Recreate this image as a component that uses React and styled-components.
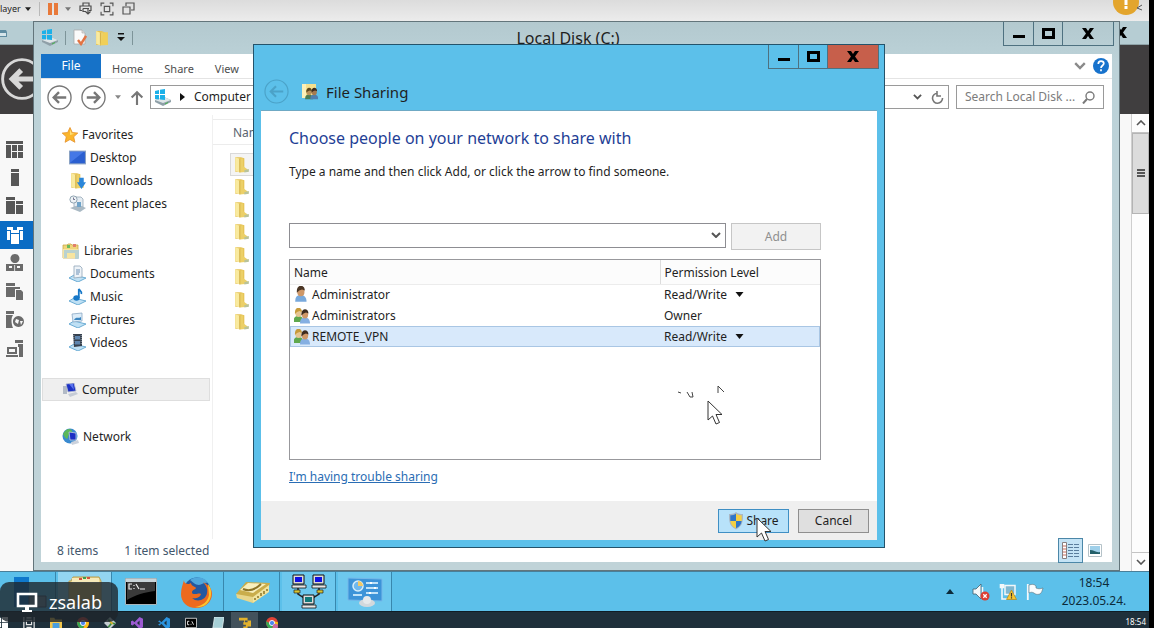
import React from "react";
import styled, { createGlobalStyle } from "styled-components";

const Global = createGlobalStyle`
  * { box-sizing: border-box; }
  html, body, #root { height: 100%; }
  body { margin: 0; overflow: hidden; background: #000; }
  body, button, input, select { font-family: "Noto Sans", "Open Sans", sans-serif; font-size: 12px; line-height: 20px; color: #1f1f1f; }
  button, input, select { margin: 0; padding: 0; border: 0; border-radius: 0; background: none; }
  svg { display: block; flex: none; }
  ul { list-style: none; margin: 0; padding: 0; }
  h1, h2, p { margin: 0; font-weight: 400; }
`;

/* ---------- layout shell ---------- */
const Screen = styled.div`
  display: grid;
  grid-template-rows: 21px 1fr 40px 17px;
  height: 100vh;
  padding-right: 5px;
  position: relative;
`;
const HostBar = styled.header`
  display: flex;
  align-items: center;
  gap: 8px;
  background: linear-gradient(#dcdcdc, #ececec);
  padding-bottom: 4px;
  position: relative;
  overflow: hidden;
`;
const HostMenu = styled.button`
  display: flex;
  align-items: center;
  gap: 4px;
  font-size: 9px;
  line-height: 16px;
`;
const BarLine = styled.span`
  width: 1px;
  height: 14px;
  background: ${(p) => p.$c || "#b9b9b9"};
`;
const PauseGroup = styled.div`
  display: flex;
  align-items: center;
  gap: 7px;
`;
const Notice = styled.div`
  position: absolute;
  right: 6px;
  top: -11px;
`;
const Session = styled.main`
  position: relative;
  overflow: hidden;
  min-height: 0;
`;

/* ---------- server manager behind ---------- */
const Manager = styled.section`
  display: flex;
  flex-direction: column;
  height: 100%;
  background: #f8f8f8;
`;
const ManagerTitle = styled.div`
  display: flex;
  align-items: center;
  justify-content: space-between;
  height: 24px;
  background: #b6cdd3;
  border-bottom: 1px solid #8fa3a8;
`;
const ManagerHead = styled.div`
  height: 69px;
  background: #403e3f;
  padding: 13px 0 0 1px;
`;
const ManagerBody = styled.div`
  display: flex;
  justify-content: space-between;
  flex: 1;
  min-height: 0;
`;
const Rail = styled.ul`
  display: flex;
  flex-direction: column;
  width: 33px;
  height: 228px;
  margin-top: 21px;
`;
const RailItem = styled.li`
  flex: 1;
  display: flex;
  align-items: center;
  padding-left: 6px;
  background: ${(p) => (p.$on ? "#0b6cc4" : "none")};
`;
const Scroll = styled.div`
  display: flex;
  flex-direction: column;
  width: 18px;
  background: #fdfdfd;
  border-left: 1px solid #cfcfcf;
`;
const ScrollBtn = styled.button`
  display: grid;
  place-items: center;
  height: 19px;
  border-bottom: 1px solid #c4c4c4;
  ${(p) => p.$end && "margin-top: auto; border-bottom: 0; border-top: 1px solid #c4c4c4;"}
`;
const Thumb = styled.div`
  display: grid;
  place-items: center;
  height: 81px;
  background: #dcdcdc;
  border: 1px solid #b4b4b4;
`;

/* ---------- windows ---------- */
const Explorer = styled.section`
  position: absolute;
  left: 33px;
  right: 29px;
  top: 0;
  bottom: 0;
  display: flex;
  flex-direction: column;
  padding: 0 7px 8px;
  background: linear-gradient(#b3c9cf, #bcd2d8 40px, #c0d3d8);
  border: 1px solid #63757b;
`;
const TitleRow = styled.div`
  display: flex;
  align-items: flex-start;
  height: 32px;
  margin-right: -2px;
`;
const QuickTools = styled.div`
  display: flex;
  align-items: center;
  gap: 7px;
  height: 31px;
  width: 92px;
`;
const Title = styled.h1`
  flex: 1;
  text-align: center;
  font-size: 16px;
  line-height: 20px;
  padding-top: 6px;
`;
const Controls = styled.div`
  display: flex;
  height: 24px;
  width: 111px;
  border: 1px solid #4e7180;
  border-top: 0;
`;
const Control = styled.button`
  display: grid;
  place-items: center;
  flex: ${(p) => p.$flex} 0 0;
  background: ${(p) => p.$bg || "none"};
  & + & { border-left: 1px solid #4e7180; }
`;
const Pane = styled.div`
  flex: 1;
  display: flex;
  flex-direction: column;
  min-height: 0;
  background: #fff;
`;
const Ribbon = styled.nav`
  display: flex;
  align-items: stretch;
  height: 25px;
  border-bottom: 1px solid #e4e4e4;
  padding-right: 3px;
`;
const FileTab = styled.button`
  width: 60px;
  background: #1672c8;
  color: #fff;
`;
const Tab = styled.button`
  margin-left: 11px;
  margin-right: 10px;
  padding-top: 5px;
  font-size: 11px;
  color: #4d4d4d;
`;
const RibbonEnd = styled.div`
  display: flex;
  align-items: center;
  gap: 7px;
  margin-left: auto;
`;
const AddressRow = styled.div`
  display: flex;
  align-items: center;
  gap: 7px;
  height: 36px;
  padding: 0 8px 0 6px;
`;
const NavButtons = styled.div`
  display: flex;
  align-items: center;
  gap: 9px;
  width: 96px;
`;
const Bare = styled.button`
  display: grid;
  place-items: center;
`;
const Address = styled.div`
  flex: 1;
  display: flex;
  align-items: center;
  height: 24px;
  gap: 9px;
  padding: 0 4px 0 3px;
  border: 1px solid #9a9a9a;
`;
const AddressEnd = styled.div`
  display: flex;
  gap: 9px;
  margin-left: auto;
`;
const Search = styled.label`
  display: flex;
  align-items: center;
  width: 148px;
  height: 24px;
  padding: 0 8px;
  border: 1px solid #9a9a9a;
  input { flex: 1; min-width: 0; outline: 0; }
  input::placeholder { color: #7c7c7c; opacity: 1; }
`;
const Columns = styled.div`
  flex: 1;
  display: flex;
  min-height: 0;
`;
const Tree = styled.nav`
  display: flex;
  flex-direction: column;
  gap: 24px;
  width: 172px;
  padding-top: 8px;
  border-right: 1px solid #f0f0f0;
`;
const Node = styled.li`
  display: flex;
  align-items: center;
  gap: 4px;
  height: 23px;
  margin: 0 2px 0 1px;
  padding-left: ${(p) => (p.$root ? 20 : 27)}px;
  background: ${(p) => (p.$on ? "#efefef" : "none")};
  box-shadow: ${(p) => (p.$on ? "inset 0 0 0 1px #dedede" : "none")};
`;
const Files = styled.div`
  flex: 1;
  max-width: 480px;
  padding-top: 4px;
`;
const FilesHead = styled.div`
  height: 26px;
  padding: 3px 0 0 20px;
  border: 1px solid #ececec;
  border-left: 0;
  color: #5b6470;
`;
const FileList = styled.ul`
  display: flex;
  flex-direction: column;
  height: 180px;
  margin: 8px 0 0 17px;
`;
const FileItem = styled.li`
  flex: 1;
  display: flex;
  align-items: center;
  padding-left: 3px;
  background: ${(p) => (p.$on ? "#f4f4f4" : "none")};
  box-shadow: ${(p) => (p.$on ? "inset 0 0 0 1px #d9d9d9" : "none")};
`;
const Status = styled.footer`
  display: flex;
  align-items: center;
  gap: 26px;
  height: 23px;
  padding: 0 10px 0 16px;
  color: #42566c;
`;
const Views = styled.div`
  display: flex;
  align-items: center;
  gap: 5px;
  margin-left: auto;
`;
const ViewOn = styled.button`
  display: grid;
  place-items: center;
  width: 25px;
  height: 25px;
  background: #c4e3f5;
  border: 1px solid #4b87a8;
`;

/* ---------- file sharing dialog ---------- */
const Dialog = styled.section`
  position: absolute;
  left: 253px;
  right: 264px;
  top: 23px;
  bottom: 23px;
  display: flex;
  flex-direction: column;
  padding: 0 7px 7px;
  background: #5cc0ea;
  border: 1px solid #24536b;
`;
const DialogControls = styled.div`
  display: flex;
  justify-content: flex-end;
  margin-right: -2px;
`;
const DialogTitle = styled.div`
  display: flex;
  align-items: center;
  gap: 12px;
  height: 42px;
  padding: 4px 0 0 3px;
  border-bottom: 1px solid #6fa9c4;
  h2 { font-size: 15px; margin-left: -4px; }
`;
const DialogBody = styled.div`
  flex: 1;
  display: flex;
  flex-direction: column;
  min-height: 0;
  padding: 15px 56px 14px 28px;
  background: #fff;
  align-items: stretch;
`;
const Heading = styled.h1`
  font-size: 16px;
  line-height: 24px;
  color: #1f3f96;
`;
const Lead = styled.p`
  margin-top: 12px;
`;
const AddRow = styled.div`
  display: flex;
  gap: 5px;
  margin-top: 41px;
`;
const Combo = styled.div`
  flex: 1;
  position: relative;
  height: 25px;
  select {
    width: 100%;
    height: 100%;
    appearance: none;
    border: 1px solid #8d8d92;
    padding: 0 24px 0 6px;
  }
  svg { position: absolute; right: 5px; top: 9px; pointer-events: none; }
`;
const PushButton = styled.button`
  display: flex;
  align-items: center;
  justify-content: center;
  gap: 2px;
  width: ${(p) => p.$w || 71}px;
  height: ${(p) => p.$h || 24}px;
  border: 1px solid ${(p) => (p.$hot ? "#3f8fc4" : "#8f8f8f")};
  background: ${(p) => (p.$hot ? "#b8e2fa" : "#dfdfdf")};
  &:disabled { color: #8f8f8f; background: #f2f2f2; border-color: #c6c6c6; }
`;
const ListBox = styled.div`
  flex: 1;
  margin-top: 9px;
  border: 1px solid #98989c;
  min-height: 0;
`;
const People = styled.table`
  width: 100%;
  border-collapse: collapse;
  table-layout: fixed;
  th, td { padding: 0 0 0 4px; height: 21px; text-align: left; font-weight: 400; }
  th { height: 24px; padding-top: 2px; background: #fcfcfc; border-bottom: 1px solid #ececec; }
  th:last-child { width: 160px; border-left: 1px solid #dcdcdc; }
`;
const Person = styled.tr`
  background: ${(p) => (p.$on ? "#d8e9fb" : "none")};
  outline: ${(p) => (p.$on ? "1px solid #a9c6e4" : "none")};
  outline-offset: -1px;
`;
const Cell = styled.div`
  display: flex;
  align-items: center;
  gap: ${(p) => p.$gap || 2}px;
  select { appearance: none; field-sizing: content; outline: 0; }
`;
const Help = styled.a`
  align-self: flex-start;
  margin-top: 7px;
  line-height: 20px;
  color: #2a6db4;
`;
const DialogFoot = styled.footer`
  display: flex;
  align-items: center;
  justify-content: flex-end;
  gap: 9px;
  height: 39px;
  padding-right: 8px;
  background: #efefef;
`;
const Pointer = styled.svg`
  position: absolute;
  left: ${(p) => p.$x}px;
  top: ${(p) => p.$y}px;
  pointer-events: none;
`;

/* ---------- task bars ---------- */
const Taskbar = styled.nav`
  display: flex;
  align-items: stretch;
  gap: 2px;
  background: #5cc0ea;
  border-top: 1px solid #4a7f99;
  padding-left: 2px;
`;
const Task = styled.button`
  display: grid;
  place-items: center;
  width: 54px;
  background: ${(p) => (p.$bg ? p.$bg : "none")};
  border-right: 1px solid ${(p) => (p.$line ? "#3887ad" : "transparent")};
`;
const Tray = styled.div`
  display: flex;
  align-items: center;
  gap: 9px;
  margin-left: auto;
`;
const TrayArrow = styled(Bare)`
  margin-right: 9px;
`;
const Clock = styled.time`
  display: block;
  width: 82px;
  margin-right: 14px;
  text-align: center;
  color: #0c2b3a;
  div { height: 18px; line-height: 18px; }
`;
const HostTasks = styled.nav`
  display: flex;
  align-items: center;
  background: #1f303b;
  border-top: 1px solid #0f1d26;
  overflow: hidden;
  padding-right: 3px;
  time { margin-left: auto; color: #fff; font-size: 8px; line-height: 16px; padding-top: 4px; }
`;
const HostTask = styled.button`
  display: grid;
  place-items: center;
  width: 27px;
  height: 17px;
  margin-left: ${(p) => (p.$first ? -12 : 0)}px;
  padding-top: 5px;
  background: ${(p) => (p.$on ? "#43525c" : "none")};
`;
const Watermark = styled.div`
  position: absolute;
  left: 0;
  bottom: 6px;
  display: flex;
  align-items: center;
  gap: 11px;
  width: 118px;
  height: 40px;
  padding-left: 16px;
  border-radius: 9px;
  background: rgba(30, 38, 44, 0.8);
  color: #fff;
  font-size: 18px;
`;

/* ---------- icons ---------- */
const Caret = ({ w = 8, h = 5, c = "#222" }) => (
  <svg width={w} height={h} viewBox="0 0 8 5"><path d="M0 0h8L4 5z" fill={c} /></svg>
);
const Chevron = ({ w = 10, up, c = "#555", s = 2 }) => (
  <svg width={w} height={w * 0.6} viewBox="0 0 10 6">
    <path d={up ? "M1 5l4-4 4 4" : "M1 1l4 4 4-4"} fill="none" stroke={c} strokeWidth={s} />
  </svg>
);
const Round = ({ size, c, flip, s = 1.4, o = 1 }) => (
  <svg width={size} height={size} viewBox="0 0 26 26" opacity={o}>
    <g fill="none" stroke={c} transform={flip ? "translate(26 0) scale(-1 1)" : undefined}>
      <circle cx="13" cy="13" r="12" strokeWidth={s} />
      <path d="M20 13H7.500M12.500 7.500L7 13l5.500 5.500" strokeWidth={s * 1.8} />
    </g>
  </svg>
);
const Drive = () => (
  <svg width="17" height="17" viewBox="0 0 17 17">
    <path d="M1 11l9-3 7 3v2l-8 4-8-4z" fill="#8fa0a8" />
    <path d="M1 11l9-3 7 3-8 3z" fill="#dfe6e8" />
    <path d="M11 15l3-1.500" stroke="#43b649" />
    <path d="M1 2l4-1v4H1zM6 .8L11 0v5H6zM1 6h4v4.500L1 10zM6 6h5v5l-5-.6z" fill="#1cb0e8" />
  </svg>
);
const Folder = ({ w = 15, extra }) => (
  <svg width={w} height={w} viewBox="0 0 15 15">
    <path d="M2 1h5l3 1v12H2z" fill="#e6c253" />
    <path d="M2 1l4 1.500v12L2 13z" fill="#f9ea9f" />
    <path d="M6 2.500L9 2v7l4 3v2l-7 .5z" fill="#ecd068" />
    <path d="M6 2.500v12" fill="none" stroke="#cba63b" strokeWidth=".7" />
    {extra === "down" && <path d="M9 5h4v4h2l-4 6-4-6h2z" fill="#2b86d9" />}
    {extra === "plain" && <path d="M9 2h4v12H6z" fill="#f0cf58" />}
    {!extra && <path d="M10 12.500l4-1v2.500l-4 .5z" fill="#b9c39a" />}
  </svg>
);
const DocCheck = () => (
  <svg width="14" height="17" viewBox="0 0 14 17">
    <path d="M1 1h8l3 3v11H1z" fill="#fafafa" stroke="#a9a9a9" strokeWidth=".8" />
    <path d="M9 1v3h3" fill="#ddd" stroke="#a9a9a9" strokeWidth=".6" />
    <path d="M5 11l3 4 5-8" fill="none" stroke="#e27443" strokeWidth="2.400" />
  </svg>
);
const Star = () => (
  <svg width="16" height="16" viewBox="0 0 16 16">
    <path d="M8 .5l2.300 5 5.500.6-4.100 3.700 1.200 5.500L8 12.500l-4.900 2.800 1.200-5.500L.2 6.100l5.500-.6z" fill="#fbb62c" stroke="#e5902b" strokeWidth=".8" />
    <path d="M8 2.500l1.600 3.800 3 .5L8 8z" fill="#ffe07a" />
  </svg>
);
const DesktopIcon = () => (
  <svg width="17" height="15" viewBox="0 0 16 14">
    <rect x=".5" y="1" width="15" height="12" fill="#2b5fd0" stroke="#8aa2c4" />
    <path d="M1 12L14 1.500H1z" fill="#4578e6" />
  </svg>
);
const Stand = ({ children }) => (
  <svg width="17" height="17" viewBox="0 0 17 17">
    <path d="M0 13l5-3 12 3-8 4z" fill="#bfe0f4" stroke="#5fa5d0" strokeWidth=".9" />
    {children}
  </svg>
);
const Documents = () => (
  <Stand><path d="M5 1h6l2 2v9l-8 1z" fill="#eef3f8" stroke="#8fa4b8" strokeWidth=".8" /><path d="M7 5h4M7 7h4M7 9h3" stroke="#6b8fb5" /></Stand>
);
const Music = () => (
  <Stand><ellipse cx="7.500" cy="10" rx="3.200" ry="2.800" fill="#1778c8" /><path d="M9.800 10V1c1 2 3.500 2 2.500 5" fill="none" stroke="#1778c8" strokeWidth="1.800" /></Stand>
);
const Pictures = () => (
  <Stand><path d="M3 3l10-1v8L4 11z" fill="#dcecf8" stroke="#8aa8c4" strokeWidth=".8" /><path d="M5 9c2-4 4-1 7-3v3z" fill="#3b86c0" /></Stand>
);
const Videos = () => (
  <Stand><path d="M4 0h9v12l-8 1z" fill="#37414e" /><path d="M6 2h5v3.500H6zM6 7h5v3.500H6z" fill="#5f86b0" /><path d="M4.800 1v10M12.200 1v10" stroke="#b8c4d0" strokeDasharray="1 1" strokeWidth=".8" /></Stand>
);
const Recent = () => (
  <svg width="17" height="17" viewBox="0 0 17 17">
    <path d="M5 2h7l2 2v8H5z" fill="#e4ecf2" stroke="#97a8b6" strokeWidth=".8" />
    <circle cx="4.500" cy="4.500" r="3.600" fill="#eef3f6" stroke="#90a4b2" />
    <path d="M4.500 2.500v2H6" stroke="#557" fill="none" strokeWidth=".8" />
    <path d="M1 13l9-3 7 3-6 4z" fill="#a9b9c4" /><path d="M8 7h4v5H8z" fill="#6fa3c8" />
  </svg>
);
const Libraries = () => (
  <svg width="18" height="18" viewBox="0 0 18 18">
    <path d="M1 3h4l1-1h3l1 1h6v13H1z" fill="#f0d57a" stroke="#c9a94b" strokeWidth=".8" />
    <path d="M5 3h3v3H5z" fill="#6abb5b" /><path d="M11 2h3v3h-3z" fill="#e3806b" />
    <path d="M1 7h15v9H1z" fill="#f7e5a0" />
    <path d="M5 16v-5h8v6h4V8H2v8z" fill="#9fcbe2" opacity=".7" />
  </svg>
);
const Monitor = () => (
  <svg width="16" height="14" viewBox="0 0 16 14">
    <path d="M1 3h4v8H1z" fill="#b2bac6" /><path d="M4 1l8-1 2 8-8 1z" fill="#1c31c4" stroke="#b6bed0" strokeWidth=".8" />
    <path d="M7 1l4 0 1 6z" fill="#5a74ee" /><path d="M6 11l8-2 2 2-8 3z" fill="#c6ccd6" />
  </svg>
);
const Network = () => (
  <svg width="17" height="17" viewBox="0 0 17 17">
    <circle cx="8" cy="8" r="7.500" fill="#3a8ad0" /><path d="M1 6c3-6 8-6 9-3s-4 3-4 6-3 2-5-3z" fill="#5bb85a" />
    <path d="M7 4l7 1v7H8z" fill="#1c2fc4" stroke="#c4cce0" strokeWidth=".8" /><path d="M9 14l7-2 1 3-7 2z" fill="#ccd2dc" />
  </svg>
);
const Head = ({ x, hair, body, skin = "#cf9868" }) => (
  <g transform={`translate(${x} 0)`}>
    <path d="M0 14c0-5 2-6 5-6s5 2 5 6z" fill={body} />
    <ellipse cx="5" cy="5" rx="3.200" ry="4" fill={skin} />
    <path d="M1.500 6c-1-8 7-8 7-2L6 3 3.500 4z" fill={hair} />
  </g>
);
const User = () => (
  <svg width="16" height="17" viewBox="0 0 13 15"><Head x={0.5} hair="#4a3524" body="#78a9dc" /></svg>
);
const Group = () => (
  <svg width="16" height="16" viewBox="0 0 16 16">
    <Head x={-0.5} hair="#c79a3a" skin="#e6c592" body="#5fa84d" />
    <g transform="translate(0 1.500)"><Head x={6} hair="#3d2c20" body="#85afe2" /></g>
  </svg>
);
const ShareFolder = () => (
  <svg width="17" height="17" viewBox="0 0 17 17">
    <path d="M1 1h14v14H1z" fill="#f5e18e" /><path d="M1 1h4v14H1z" fill="#fbf0b8" />
    <g transform="translate(4.500 5) scale(.8)"><Head x={-0.5} hair="#5c4a20" skin="#b8915a" body="#4a7d52" /><Head x={6} hair="#3d2c20" skin="#a47a50" body="#4f7fae" /></g>
  </svg>
);
const Shield = () => (
  <svg width="16" height="18" viewBox="0 0 16 18">
    <path d="M8 0c2 2 5 2 7 2 0 7 0 12-7 15.500C1 14 1 9 1 2c2 0 5 0 7-2z" fill="#a9b7c4" />
    <path d="M8 1.700V9H2.300V3.200c2 0 4-.3 5.700-1.500z" fill="#2f76c9" /><path d="M8 1.700V9h5.700V3.200c-2 0-4-.3-5.700-1.500z" fill="#f3cf45" />
    <path d="M8 9H2.400c.4 3.500 2 5.700 5.600 7.300z" fill="#f3cf45" /><path d="M8 9h5.600c-.4 3.500-2 5.700-5.600 7.300z" fill="#2f76c9" />
  </svg>
);
const railPaths = [
  "M0 1h17v3H0zM0 5h5v13H0zM6 5h5v6H6zM12 5h5v6h-5zM6 12h5v6H6zM12 12h5v6h-5z",
  "M5 0h8v3H5zM5 4h8v13H5z",
  "M0 0h9v3H0zM0 4h9v13H0zM10 4h7v3h-7zM10 8h7v9h-7z",
  "M1 1h6v3H1zM11 1h6v3h-6zM5 4h8v3H5zM1 5h3v9H1zM14 5h3v9h-3zM5 8h8v10H5z",
  "M9 0a4.500 4.500 0 1 1-.1 0zM0 10h17v7H0zM3 12v2h3v-2zM11 12v2h3v-2zM8.300 11v6h.8v-6z",
  "M0 0h9v3H0zM0 4h14v2H9v8H0zM10 7h5l2 2v8h-7z",
  "M0 0h8v3H0zM0 4h7c-2 3-2 8 0 13H0zM12.500 5a5.500 5.500 0 1 1-.1 0zM10 8l3 1-1 4-3-2zM14 10l3 0-2 4z",
  "M9 0h8v3H9zM12 4h5v13h-4V7h-1zM1 7h10v7H1zM0 15h12v2H0zM3 9v3h6V9z",
];
const RailIcon = ({ i }) => (
  <svg width="18" height="18" viewBox="0 0 18 18"><path d={railPaths[i]} fillRule="evenodd" fill={i === 3 ? "#fff" : i < 3 ? "#575757" : "#6b6b6b"} /></svg>
);
const Printer = () => (
  <svg width="13" height="13" viewBox="0 0 13 13" fill="none" stroke="#4c4c4c" strokeWidth="1.200">
    <path d="M4 4V1h6v3M3 8.500H1V4h11v4.500h-2M4 6.500h6M9 6.500v5M6.500 9.500L9 12l2.500-2.500M4 6.500v3h3" />
  </svg>
);
const FullScreen = () => (
  <svg width="14" height="14" viewBox="0 0 13 13" fill="none" stroke="#555" strokeWidth="1.100">
    <path d="M1 4V1h3M9 1h3v3M12 9v3H9M4 12H1V9M4 4h5v5H4z" />
  </svg>
);
const Unity = () => (
  <svg width="13" height="13" viewBox="0 0 13 13" fill="none" stroke="#555" strokeWidth="1.200">
    <path d="M4 4V1h8v7H9M1 5h7v7H1z" />
  </svg>
);
const MinGlyph = () => <svg width="12" height="12" viewBox="0 0 12 12"><path d="M0 7h12v3H0z" fill="#000" /></svg>;
const MaxGlyph = () => <svg width="13" height="11" viewBox="0 0 13 11"><path d="M1.500 1.500h10v8h-10z" fill="none" stroke="#000" strokeWidth="3" /></svg>;
const CloseGlyph = () => <svg width="12" height="11" viewBox="0 0 12 11"><path d="M0 0h4l2 3 2-3h4L8 5.500 12 11H8L6 8l-2 3H0l4-5.500z" fill="#000" /></svg>;
const Magnifier = () => (
  <svg width="13" height="13" viewBox="0 0 13 13" fill="none" stroke="#7a7a7a"><circle cx="8" cy="5" r="4" strokeWidth="1.400" /><path d="M5 8l-4 4.500" strokeWidth="2" /></svg>
);
const Refresh = () => (
  <svg width="13" height="13" viewBox="0 0 13 13" fill="none" stroke="#777" strokeWidth="1.600"><path d="M11.500 7a5 5 0 1 1-5-4.800M6 0v5h4" /></svg>
);
const Details = () => (
  <svg width="17" height="17" viewBox="0 0 17 17"><path d="M.5.5h4v16h-4z" fill="#fff" stroke="#8a7f7f" /><path d="M1 4h3M1 7h3M1 10h3M1 13h3" stroke="#c56b5a" /><path d="M6 2.500h5M12 2.500h5M6 5.500h5M12 5.500h5M6 8.500h5M12 8.500h5M6 11.500h5M12 11.500h5M6 14.500h5M12 14.500h5" stroke="#5a7d9c" /></svg>
);
const Thumbs = () => (
  <svg width="14" height="13" viewBox="0 0 14 13"><path d="M.5.5h13v12H.5z" fill="#fff" stroke="#b5c2c8" /><path d="M2 2h10v8H2z" fill="#9fd0ea" /><path d="M2 10V6c4 0 6 3 10 2v2z" fill="#24606a" /></svg>
);
const ManagerTask = () => (
  <svg width="36" height="36" viewBox="0 0 36 36"><path d="M3 3h15v30H3z" fill="#0f78cc" /><path d="M18 22h17v11H18z" fill="#7895a4" stroke="#456" /></svg>
);
const ExplorerTask = () => (
  <svg width="36" height="34" viewBox="0 0 36 34"><path d="M4 6l2-4h26l2 4v24H2V6z" fill="#ead58a" stroke="#b99e50" /><path d="M5 3h27v5H5z" fill="#f6e9b8" /><path d="M12 4h3M20 3h3" stroke="#d5523f" strokeWidth="2" /><path d="M16 3h3" stroke="#3f9c4f" strokeWidth="2" /><path d="M2 8h31v23H2z" fill="#dfc068" /></svg>
);
const CmdTask = () => (
  <svg width="32" height="27" viewBox="0 0 32 27"><path d="M.5.5h31v26H.5z" fill="#000" stroke="#a9b6bc" /><path d="M1 1h30v3H1z" fill="#c9d4d8" /><path d="M2 4h28v9c-10 1-20 4-28 9z" fill="#3a3a3a" /><path d="M7 6H4v5h3M9 7v1M9 10v1M11 6l3 5M15 11h5" fill="none" stroke="#eee" strokeWidth="1.200" /></svg>
);
const Firefox = () => (
  <svg width="33" height="32" viewBox="0 0 33 32">
    <circle cx="17" cy="15" r="13.500" fill="#23589f" /><path d="M10 4c6-4 15-3 18 3-4-1-6 2-9 2-4 0-6-3-9-5z" fill="#4fa8dc" />
    <path d="M4 4c0 3 2 4 5 4l2-1c0 3 5 4 5 5s-4 2-4 4 1 2 3 2c3 0 4-1 6 0-1 4-6 5-9 4 5 5 14 2 15-5 1-4-1-8-4-11 6 3 9 7 9 12 0 8-7 14-16 14C7 32 1 26 1 18 1 12 3 8 4 4z" fill="#ec6a1e" />
    <path d="M28 8c4 5 4 12 1 17-3 5-8 7-14 6 8-1 13-6 14-12z" fill="#fbc52d" />
  </svg>
);
const Mailbox = () => (
  <svg width="36" height="24" viewBox="0 0 36 24"><path d="M1 14L11 2l24 1-3 10-14 10z" fill="#c9ad4b" /><path d="M1 14l17 3v6L2 18z" fill="#e7d68b" /><path d="M18 17L34 5v7L18 23z" fill="#f1e49f" /><path d="M5 10L13 3l18 1-13 9z" fill="#f8efbd" /><path d="M8 9c7 3 13 0 18-5" fill="none" stroke="#8c7427" strokeWidth="2" /><path d="M20 18v2M23 16v2M26 13v3M29 11v3M32 9v2" stroke="#8c7427" strokeWidth="1.500" /></svg>
);
const Pc = ({ x, y, c }) => (
  <g transform={`translate(${x} ${y})`}><path d="M1 0h11v9H1z" fill="#dcdcdc" stroke="#111" /><path d="M3 2h7v5H3z" fill={c} /><path d="M0 10h14v3H0z" fill="#e8e8e8" stroke="#111" strokeWidth=".8" /></g>
);
const NetTask = () => (
  <svg width="36" height="36" viewBox="0 0 36 36"><path d="M7 14v6l6 4v4M28 14v6l-6 4v4" fill="none" stroke="#222" strokeWidth="1.500" /><path d="M3 16h6v3H3zM26 16h6v3h-6z" fill="#d8c32f" stroke="#222" strokeWidth=".7" /><Pc x={1} y={1} c="#1010e0" /><Pc x={21} y={1} c="#1010e0" /><Pc x={11} y={21} c="#107878" /></svg>
);
const PanelTask = () => (
  <svg width="36" height="32" viewBox="0 0 36 32"><path d="M1 2l34 1v22L1 24z" fill="#3c93d8" stroke="#74b8ea" /><circle cx="11" cy="10" r="5" fill="#6fb8ee" stroke="#d7eefb" strokeWidth="1.500" /><path d="M11 5a5 5 0 0 1 5 5h-5z" fill="#f2c866" /><path d="M19 7h12M19 12h12M19 17h12M6 19h9" stroke="#bfe2f8" strokeWidth="2" /><path d="M24 6v2M28 11v2M23 16v2" stroke="#fff" strokeWidth="2" /><ellipse cx="20" cy="27" rx="8" ry="4" fill="#d3d8dc" /><circle cx="20" cy="24" r="4" fill="#e6e9eb" /></svg>
);
const Speaker = () => (
  <svg width="18" height="18" viewBox="0 0 18 18"><path d="M1 6h3l5-5v15l-5-5H1z" fill="#f4f8fa" stroke="#42606e" strokeWidth=".8" /><path d="M10.500 4v6" stroke="#f4f8fa" strokeWidth="1.500" /><circle cx="13" cy="13" r="4.500" fill="#dd3f34" /><path d="M11.300 11.300l3.400 3.400M14.700 11.300l-3.400 3.400" stroke="#fff" strokeWidth="1.300" /></svg>
);
const NetWarn = () => (
  <svg width="18" height="18" viewBox="0 0 18 18"><path d="M6 2.500h10v9H6z" fill="#7fb7d0" stroke="#f2f7f9" strokeWidth="1.500" /><path d="M3 1v4M1.500 1v3.500h3V1M3 5v11h5" fill="none" stroke="#f2f7f9" strokeWidth="1.600" /><path d="M12.500 7l5 9.500h-10z" fill="#f7c531" stroke="#b98516" strokeWidth=".7" /><path d="M12.500 10v3.500M12.500 14.300v1.200" stroke="#333" strokeWidth="1.200" /></svg>
);
const Flag = () => (
  <svg width="18" height="18" viewBox="0 0 18 18"><path d="M1.800 1v16" stroke="#f4f8fa" strokeWidth="1.800" /><path d="M3 2c3-1 5-1 7 1v2c2 1 4 1 7 0-1 3-1 4-3 6-3 1-5 0-6-1-2-1-3-1-5 0z" fill="#fafcfd" stroke="#55707c" strokeWidth=".6" /></svg>
);
const chromeParts = (
  <><circle cx="7" cy="7" r="7" fill="#e04335" /><path d="M0 5c0 8 5 9 7 9l2-6-5-1z" fill="#35a853" /><path d="M14 6c0 6-4 8-7 8l3-6-1-3z" fill="#fbc116" /><circle cx="7" cy="7" r="3" fill="#4b85f0" stroke="#fff" /></>
);
const hostIcons = [
  ["Start", <path d="M0 1h6v5H0zM7 0h7v6H7zM0 7h6v5H0zM7 7h7v6H7z" fill="#fff" />],
  ["Task view", <path d="M1 0v13M4 1h6M4 12h6M4 4h6v5H4zM13 0v13" fill="none" stroke="#e6e6e6" strokeWidth="1.400" />],
  ["Files", <><path d="M0 1h5l1 2h8v10H0z" fill="#f3c64b" /><path d="M3 7h8v6H3z" fill="#4a9ede" /></>],
  ["Chrome", chromeParts],
  ["Git", <><path d="M7 0l7 7-7 7-7-7z" fill="#c4cbd0" /><path d="M5 3l4 4-4 5M9 7l4 1" fill="none" stroke="#3c8a3e" strokeWidth="2" /><path d="M7 5l3 3" stroke="#e0b42c" strokeWidth="2" /></>],
  ["Visual Studio", <path d="M10 0l4 2v10l-4 2-6-6-2 2-2-1V5l2-1 2 2zM10 4L7 7l3 3z" fillRule="evenodd" fill="#9c5ad2" />],
  ["Code", <path d="M10 0l4 2v10l-4 2-6-6-2 2-2-1 3-2-3-2 2-1 2 2zM10 4L7 7l3 3z" fillRule="evenodd" fill="#2b93de" />],
  ["Prompt", <><path d="M.5 1.500h13v11H.5z" fill="#000" stroke="#ddd" /><path d="M5 5H3v4h2M7 8v1M8 5l2 4" stroke="#fff" fill="none" /></>],
  ["Notepad", <path d="M3 0h11l-2 13H1z" fill="#a6cfd6" stroke="#dcecef" />],
  ["Workstation", <path d="M0 1h10v3H7v2h3V4h4v7h-4v3H5v-3h3V9H5V6h1V4H0z" fill="#e3b22c" />],
  ["Chrome profile", <>{chromeParts}<circle cx="11" cy="11" r="3" fill="#c96aa0" /></>],
];

const WindowControls = ({ red }) => (
  <Controls>
    <Control $flex={30} aria-label="Minimize"><MinGlyph /></Control>
    <Control $flex={28} aria-label="Maximize"><MaxGlyph /></Control>
    <Control $flex={51} $bg={red && "#c75f4b"} aria-label="Close"><CloseGlyph /></Control>
  </Controls>
);

const tree = [
  [["Favorites", <Star />, true], ["Desktop", <DesktopIcon />], ["Downloads", <Folder w={17} extra="down" />], ["Recent places", <Recent />]],
  [["Libraries", <Libraries />, true], ["Documents", <Documents />], ["Music", <Music />], ["Pictures", <Pictures />], ["Videos", <Videos />]],
  [["Computer", <Monitor />, true, true]],
  [["Network", <Network />, true]],
];
const people = [
  ["Administrator", <User />, "Read/Write"],
  ["Administrators", <Group />, null],
  ["REMOTE_VPN", <Group />, "Read/Write", true],
];
const arrowShape = "M1 1v19l4.500-4 3.500 8 3.500-1.500L9 14.500h6z";

export default function App() {
  return (
    <>
      <Global />
      <Screen>
        <HostBar>
          <HostMenu>layer <Caret w={6} h={4} /></HostMenu>
          <BarLine />
          <PauseGroup>
            <Bare aria-label="Pause"><svg width="10" height="12" viewBox="0 0 10 12"><path d="M0 0h4v12H0zM6 0h4v12H6z" fill="#e8793a" /></svg></Bare>
            <Caret w={6} h={4} c="#777" />
          </PauseGroup>
          <Bare aria-label="Send keys"><Printer /></Bare>
          <Bare aria-label="Full screen"><FullScreen /></Bare>
          <Bare aria-label="Unity"><Unity /></Bare>
          <Notice>
            <svg width="30" height="28" viewBox="0 0 30 28">
              <circle cx="13" cy="13" r="13" fill="#e3a52d" />
              <path d="M13 8v8M13 17v3" stroke="#fff" strokeWidth="3" />
              <path d="M29 16l-5 3 5 2" fill="none" stroke="#555" />
            </svg>
          </Notice>
        </HostBar>

        <Session>
          <Manager>
            <ManagerTitle>
              <svg width="8" height="10" viewBox="0 0 8 10"><path d="M0 2h6l1 2v5H0z" fill="#5e8ba0" /><path d="M0 5h6v3H0z" fill="#d5e5ea" /></svg>
              <svg width="30" height="12" viewBox="0 0 30 12"><path d="M0 0h4l2 3 2-3h4L8 5.500 12 11H8L6 8l-2 3H0l4-5.500z" fill="#000" transform="translate(-4 0)" /></svg>
            </ManagerTitle>
            <ManagerHead><Round size={42} c="#d8d8d8" s={1.8} /></ManagerHead>
            <ManagerBody>
              <Rail>{railPaths.map((_, i) => <RailItem key={i} $on={i === 3}><RailIcon i={i} /></RailItem>)}</Rail>
              <Scroll>
                <ScrollBtn aria-label="Scroll up"><Chevron up s={1.6} /></ScrollBtn>
                <Thumb><svg width="8" height="9" viewBox="0 0 8 9"><path d="M0 1h8M0 4h8M0 7h8" stroke="#555" strokeWidth="2" /></svg></Thumb>
                <ScrollBtn $end aria-label="Scroll down"><Chevron s={1.6} /></ScrollBtn>
              </Scroll>
            </ManagerBody>
          </Manager>

          <Explorer>
            <TitleRow>
              <QuickTools>
                <Drive />
                <BarLine $c="#7d9499" />
                <DocCheck />
                <Folder w={16} extra="plain" />
                <svg width="8" height="9" viewBox="0 0 8 9"><path d="M1 0h6v1.500H1zM0 4h8L4 8z" fill="#111" /></svg>
                <BarLine $c="#7d9499" />
              </QuickTools>
              <Title>Local Disk (C:)</Title>
              <WindowControls />
            </TitleRow>
            <Pane>
              <Ribbon>
                <FileTab>File</FileTab>
                <Tab>Home</Tab><Tab>Share</Tab><Tab>View</Tab>
                <RibbonEnd>
                  <Chevron w={12} c="#8a8a8a" />
                  <Bare aria-label="Help"><svg width="16" height="16" viewBox="0 0 16 16"><circle cx="8" cy="8" r="8" fill="#1772cc" /><path d="M5.300 6c0-4 5.500-3.500 5.500-.5C10.800 7.500 8 7.500 8 10M8 11.300v2" fill="none" stroke="#fff" strokeWidth="1.700" /></svg></Bare>
                </RibbonEnd>
              </Ribbon>
              <AddressRow>
                <NavButtons>
                  <Bare aria-label="Back"><Round size={25} c="#777" /></Bare>
                  <Bare aria-label="Forward"><Round size={25} c="#777" flip /></Bare>
                  <Caret w={6} h={4} c="#888" />
                  <Bare aria-label="Up"><svg width="14" height="15" viewBox="0 0 12 14"><path d="M6 14V2M1 7l5-5 5 5" fill="none" stroke="#777" strokeWidth="2" /></svg></Bare>
                </NavButtons>
                <Address>
                  <Drive />
                  <svg width="5" height="8" viewBox="0 0 5 8"><path d="M0 0l5 4-5 4z" fill="#111" /></svg>
                  Computer
                  <AddressEnd>
                    <Bare aria-label="Previous locations"><Chevron w={9} /></Bare>
                    <Bare aria-label="Refresh"><Refresh /></Bare>
                  </AddressEnd>
                </Address>
                <Search><input type="text" aria-label="Search Local Disk" placeholder="Search Local Disk ..." /><Magnifier /></Search>
              </AddressRow>
              <Columns>
                <Tree>
                  {tree.map((g, i) => (
                    <ul key={i}>{g.map(([t, icon, root, on]) => <Node key={t} $root={root} $on={on}>{icon}{t}</Node>)}</ul>
                  ))}
                </Tree>
                <Files>
                  <FilesHead>Name</FilesHead>
                  <FileList>{[0, 1, 2, 3, 4, 5, 6, 7].map((i) => <FileItem key={i} $on={i === 0}><Folder w={17} /></FileItem>)}</FileList>
                </Files>
              </Columns>
              <Status>
                <span>8 items</span><span>1 item selected</span>
                <Views><ViewOn aria-label="Details"><Details /></ViewOn><Bare aria-label="Thumbnails"><Thumbs /></Bare></Views>
              </Status>
            </Pane>
          </Explorer>

          <Dialog role="dialog" aria-label="File Sharing">
            <DialogControls><WindowControls red /></DialogControls>
            <DialogTitle>
              <Round size={25} c="#3b86a8" s={1.2} o={0.5} />
              <ShareFolder />
              <h2>File Sharing</h2>
            </DialogTitle>
            <DialogBody>
              <Heading>Choose people on your network to share with</Heading>
              <Lead>Type a name and then click Add, or click the arrow to find someone.</Lead>
              <AddRow>
                <Combo><select aria-label="Name to add" defaultValue=""><option value="" /></select><Chevron w={10} /></Combo>
                <PushButton $w={90} $h={27} disabled>Add</PushButton>
              </AddRow>
              <ListBox>
                <People>
                  <thead><tr><th>Name</th><th>Permission Level</th></tr></thead>
                  <tbody>
                    {people.map(([n, icon, perm, on]) => (
                      <Person key={n} $on={on}>
                        <td><Cell>{icon}{n}</Cell></td>
                        <td>
                          <Cell $gap={8}>
                            {perm ? <><select aria-label={`Permission for ${n}`} defaultValue={perm}><option>{perm}</option></select><Caret w={9} h={5} c="#111" /></> : "Owner"}
                          </Cell>
                        </td>
                      </Person>
                    ))}
                  </tbody>
                </People>
              </ListBox>
              <Help href="#help">I'm having trouble sharing</Help>
            </DialogBody>
            <DialogFoot>
              <PushButton $hot><Shield />Share</PushButton>
              <PushButton>Cancel</PushButton>
            </DialogFoot>
            <Pointer $x={422} $y={340} width="50" height="44" viewBox="0 0 50 44">
              <path d="M2 7l3 1M11 7l3 5h3l-1-5M42 8V1l6 6" fill="none" stroke="#444" />
              <path d={arrowShape} transform="translate(31 15)" fill="#fff" stroke="#333" />
            </Pointer>
            <Pointer $x={502} $y={472} width="18" height="28" viewBox="0 0 18 28">
              <path d={arrowShape} fill="#fff" stroke="#333" />
            </Pointer>
          </Dialog>
        </Session>

        <Taskbar>
          <Task $line aria-label="Server Manager"><ManagerTask /></Task>
          <Task $line $bg="#93d5f1" aria-label="Explorer"><ExplorerTask /></Task>
          <Task aria-label="Command Prompt"><CmdTask /></Task>
          <Task $line aria-label="Firefox"><Firefox /></Task>
          <Task $line aria-label="Mail server"><Mailbox /></Task>
          <Task $line $bg="#6dc8ee" aria-label="Connections"><NetTask /></Task>
          <Task $line $bg="#6dc8ee" aria-label="Control panel"><PanelTask /></Task>
          <Tray>
            <TrayArrow aria-label="Show hidden icons"><svg width="8" height="5" viewBox="0 0 8 5"><path d="M4 0l4 5H0z" fill="#0c2b3a" /></svg></TrayArrow>
            <Speaker /><NetWarn /><Flag />
            <Clock><div>18:54</div><div>2023.05.24.</div></Clock>
          </Tray>
        </Taskbar>
        <HostTasks>
          {hostIcons.map(([name, art], i) => (
            <HostTask key={name} $first={i === 0} $on={i === 9} aria-label={name}><svg width="12" height="12" viewBox="0 0 14 14">{art}</svg></HostTask>
          ))}
          <time>18:54</time>
        </HostTasks>
        <Watermark>
          <svg width="22" height="22" viewBox="0 0 22 22"><path d="M2 3h18v12H2z" fill="none" stroke="#fff" strokeWidth="2.600" /><path d="M9 16h4v3h3v2H6v-2h3z" fill="#fff" /></svg>
          zsalab
        </Watermark>
      </Screen>
    </>
  );
}
